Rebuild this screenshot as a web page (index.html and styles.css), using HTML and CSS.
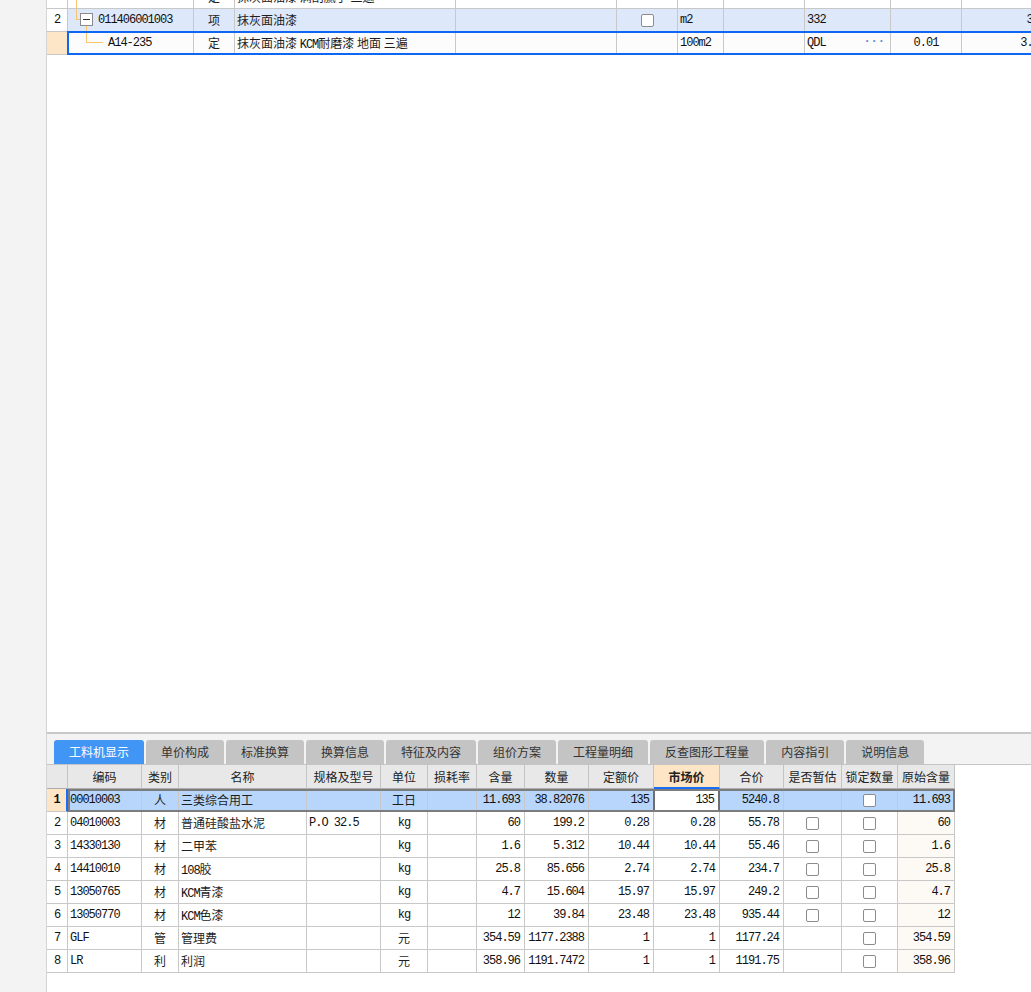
FILE: index.html
```html
<!DOCTYPE html>
<html lang="zh-CN">
<head>
<meta charset="utf-8">
<title>工料机显示</title>
<link rel="stylesheet" href="styles.css">
</head>
<body>
<div class="side"></div>
<div class="main">
  <div class="upper">
    <div class="tree">
      <div class="trow">
        <div class="c"></div>
        <div class="c code"><span class="ln v-full"></span></div>
        <div class="c m">定</div>
        <div class="c l">抹灰面油漆 满刮腻子 二遍</div>
        <div class="c"></div>
        <div class="c"></div>
        <div class="c"></div>
        <div class="c"></div>
        <div class="c l mono">1</div>
        <div class="c"></div>
        <div class="c r mono">1</div>
      </div>
      <div class="trow hl">
        <div class="c m mono rn">2</div>
        <div class="c code mono pad30"><span class="ln v-top1"></span><span class="ln h-1"></span><span class="box"></span><span class="ln v-bot1"></span>011406001003</div>
        <div class="c m">项</div>
        <div class="c l">抹灰面油漆</div>
        <div class="c"></div>
        <div class="c cbc"><span class="cb"></span></div>
        <div class="c l mono">m2</div>
        <div class="c"></div>
        <div class="c l mono">332</div>
        <div class="c"></div>
        <div class="c r mono">332</div>
      </div>
      <div class="trow cur">
        <div class="c peach"></div>
        <div class="c code mono pad40"><span class="ln v-top2"></span><span class="ln h-2"></span>A14-235</div>
        <div class="c m">定</div>
        <div class="c l">抹灰面油漆 <span class="mono">KCM</span>耐磨漆 地面 三遍</div>
        <div class="c"></div>
        <div class="c"></div>
        <div class="c l mono">100m2</div>
        <div class="c"></div>
        <div class="c l mono">QDL<span class="dots">···</span></div>
        <div class="c m mono">0.01</div>
        <div class="c r mono">3.32</div>
      </div>
      <div class="curframe"></div>
    </div>
  </div>
  <div class="lower">
    <div class="tabs">
      <div class="tab on">工料机显示</div>
      <div class="tab">单价构成</div>
      <div class="tab">标准换算</div>
      <div class="tab">换算信息</div>
      <div class="tab">特征及内容</div>
      <div class="tab">组价方案</div>
      <div class="tab">工程量明细</div>
      <div class="tab">反查图形工程量</div>
      <div class="tab">内容指引</div>
      <div class="tab">说明信息</div>
    </div>
    <div class="grid">
      <div class="brow head">
        <div class="h"></div>
        <div class="h">编码</div>
        <div class="h">类别</div>
        <div class="h">名称</div>
        <div class="h">规格及型号</div>
        <div class="h">单位</div>
        <div class="h">损耗率</div>
        <div class="h">含量</div>
        <div class="h">数量</div>
        <div class="h">定额价</div>
        <div class="h hmk">市场价</div>
        <div class="h">合价</div>
        <div class="h">是否暂估</div>
        <div class="h">锁定数量</div>
        <div class="h">原始含量</div>
      </div>
      <div class="brow sel">
        <div class="d rn1 mono">1</div>
        <div class="d l mono">00010003</div>
        <div class="d m">人</div>
        <div class="d l">三类综合用工</div>
        <div class="d l"></div>
        <div class="d m">工日</div>
        <div class="d"></div>
        <div class="d r mono">11.693</div>
        <div class="d r mono">38.82076</div>
        <div class="d r mono">135</div>
        <div class="d r mono mk">135</div>
        <div class="d r mono">5240.8</div>
        <div class="d"></div>
        <div class="d cbc"><span class="cb"></span></div>
        <div class="d r mono">11.693</div>
      </div>
      <div class="brow">
        <div class="d m mono">2</div>
        <div class="d l mono">04010003</div>
        <div class="d m">材</div>
        <div class="d l">普通硅酸盐水泥</div>
        <div class="d l mono">P.O 32.5</div>
        <div class="d m mono">kg</div>
        <div class="d"></div>
        <div class="d r mono">60</div>
        <div class="d r mono">199.2</div>
        <div class="d r mono">0.28</div>
        <div class="d r mono">0.28</div>
        <div class="d r mono">55.78</div>
        <div class="d cbc"><span class="cb"></span></div>
        <div class="d cbc"><span class="cb"></span></div>
        <div class="d r mono orig">60</div>
      </div>
      <div class="brow">
        <div class="d m mono">3</div>
        <div class="d l mono">14330130</div>
        <div class="d m">材</div>
        <div class="d l">二甲苯</div>
        <div class="d l"></div>
        <div class="d m mono">kg</div>
        <div class="d"></div>
        <div class="d r mono">1.6</div>
        <div class="d r mono">5.312</div>
        <div class="d r mono">10.44</div>
        <div class="d r mono">10.44</div>
        <div class="d r mono">55.46</div>
        <div class="d cbc"><span class="cb"></span></div>
        <div class="d cbc"><span class="cb"></span></div>
        <div class="d r mono orig">1.6</div>
      </div>
      <div class="brow">
        <div class="d m mono">4</div>
        <div class="d l mono">14410010</div>
        <div class="d m">材</div>
        <div class="d l"><span class="mono">108</span>胶</div>
        <div class="d l"></div>
        <div class="d m mono">kg</div>
        <div class="d"></div>
        <div class="d r mono">25.8</div>
        <div class="d r mono">85.656</div>
        <div class="d r mono">2.74</div>
        <div class="d r mono">2.74</div>
        <div class="d r mono">234.7</div>
        <div class="d cbc"><span class="cb"></span></div>
        <div class="d cbc"><span class="cb"></span></div>
        <div class="d r mono orig">25.8</div>
      </div>
      <div class="brow">
        <div class="d m mono">5</div>
        <div class="d l mono">13050765</div>
        <div class="d m">材</div>
        <div class="d l"><span class="mono">KCM</span>青漆</div>
        <div class="d l"></div>
        <div class="d m mono">kg</div>
        <div class="d"></div>
        <div class="d r mono">4.7</div>
        <div class="d r mono">15.604</div>
        <div class="d r mono">15.97</div>
        <div class="d r mono">15.97</div>
        <div class="d r mono">249.2</div>
        <div class="d cbc"><span class="cb"></span></div>
        <div class="d cbc"><span class="cb"></span></div>
        <div class="d r mono orig">4.7</div>
      </div>
      <div class="brow">
        <div class="d m mono">6</div>
        <div class="d l mono">13050770</div>
        <div class="d m">材</div>
        <div class="d l"><span class="mono">KCM</span>色漆</div>
        <div class="d l"></div>
        <div class="d m mono">kg</div>
        <div class="d"></div>
        <div class="d r mono">12</div>
        <div class="d r mono">39.84</div>
        <div class="d r mono">23.48</div>
        <div class="d r mono">23.48</div>
        <div class="d r mono">935.44</div>
        <div class="d cbc"><span class="cb"></span></div>
        <div class="d cbc"><span class="cb"></span></div>
        <div class="d r mono orig">12</div>
      </div>
      <div class="brow">
        <div class="d m mono">7</div>
        <div class="d l mono">GLF</div>
        <div class="d m">管</div>
        <div class="d l">管理费</div>
        <div class="d l"></div>
        <div class="d m">元</div>
        <div class="d"></div>
        <div class="d r mono">354.59</div>
        <div class="d r mono">1177.2388</div>
        <div class="d r mono">1</div>
        <div class="d r mono">1</div>
        <div class="d r mono">1177.24</div>
        <div class="d"></div>
        <div class="d cbc"><span class="cb"></span></div>
        <div class="d r mono orig">354.59</div>
      </div>
      <div class="brow">
        <div class="d m mono">8</div>
        <div class="d l mono">LR</div>
        <div class="d m">利</div>
        <div class="d l">利润</div>
        <div class="d l"></div>
        <div class="d m">元</div>
        <div class="d"></div>
        <div class="d r mono">358.96</div>
        <div class="d r mono">1191.7472</div>
        <div class="d r mono">1</div>
        <div class="d r mono">1</div>
        <div class="d r mono">1191.75</div>
        <div class="d"></div>
        <div class="d cbc"><span class="cb"></span></div>
        <div class="d r mono orig">358.96</div>
      </div>
      <div class="selframe"></div>
    </div>
  </div>
</div>
</body>
</html>
```
FILE: styles.css
```css
* { box-sizing: border-box; }
html, body { margin: 0; padding: 0; }
body {
  display: flex;
  width: 1031px;
  height: 992px;
  overflow: hidden;
  background: #fff;
  font-family: "Noto Sans CJK SC", "Liberation Sans", sans-serif;
  font-size: 12px;
  color: #1e1e1e;
}
.side { width: 46px; flex: none; background: #f3f3f3; }
.main {
  flex: 1;
  min-width: 0;
  border-left: 1px solid #d4d4d4;
  display: flex;
  flex-direction: column;
  overflow: hidden;
}
.upper {
  flex: 1;
  min-height: 0;
  overflow: hidden;
  background: #fff;
  border-bottom: 2px solid #c8c8c8;
}
.mono {
  font-family: "Liberation Mono", "Noto Sans CJK SC", monospace;
  font-size: 12px;
  letter-spacing: -1px;
  color: #111;
}
.l { padding-left: 2px; }
.r { text-align: right; padding-right: 4px; }
.m { text-align: center; }

/* upper tree table */
.tree { position: relative; margin-top: -14px; width: 1003px; }
.trow {
  display: grid;
  grid-template-columns: 21px 126px 41px 221px 161px 61px 46px 81px 86px 71px 88px;
  height: 23px;
}
.c {
  position: relative;
  border-right: 1px solid #c8c8c8;
  border-bottom: 1px solid #c8c8c8;
  line-height: 22px;
  white-space: nowrap;
  overflow: hidden;
}
.trow.hl .c { background: #dde8fb; }
.trow.hl .c.rn { background: #fff; }
.trow.cur .c { background: #fcfcfc; }
.trow.cur .c.peach { background: #fde6c8; }
.pad30 { padding-left: 30px; }
.pad40 { padding-left: 40px; }
.ln { position: absolute; background: #f9c46c; }
.v-full { left: 8px; top: 0; bottom: 0; width: 1px; }
.v-top1 { left: 8px; top: 0; height: 11px; width: 1px; }
.h-1 { left: 8px; top: 10px; width: 5px; height: 1px; }
.v-bot1 { left: 18px; top: 17px; bottom: 0; width: 1px; }
.v-top2 { left: 18px; top: 0; height: 11px; width: 1px; }
.h-2 { left: 18px; top: 10px; width: 17px; height: 1px; }
.box {
  position: absolute;
  left: 12px;
  top: 4px;
  width: 13px;
  height: 13px;
  border: 1px solid #8c8c8c;
  background: #fff;
}
.box::after {
  content: "";
  position: absolute;
  left: 2px;
  top: 5px;
  width: 7px;
  height: 1px;
  background: #333;
}
.dots {
  position: absolute;
  right: 5px;
  top: -1px;
  color: #5b8ed4;
  font-weight: bold;
  letter-spacing: 0;
}
.curframe {
  position: absolute;
  left: 20px;
  top: 45px;
  width: 1000px;
  height: 24px;
  border: 2px solid #0f66f2;
  pointer-events: none;
}
.cbc { display: flex; align-items: center; justify-content: center; }
.cb {
  display: block;
  width: 13px;
  height: 13px;
  border: 1px solid #8c8c8c;
  border-radius: 2px;
  background: #fff;
}

/* lower panel */
.lower { height: 258px; flex: none; background: #fff; }
.tabs {
  display: flex;
  gap: 2px;
  padding: 6px 0 0 7px;
  height: 31px;
  background: #f3f3f3;
  border-bottom: 1px solid #c4c4c4;
}
.tab {
  height: 24px;
  line-height: 24px;
  padding: 0 15px;
  background: #c4c4c4;
  color: #333;
  border-radius: 3px 3px 0 0;
  white-space: nowrap;
}
.tab.on { background: #4196f5; color: #fff; }

.grid { position: relative; width: 908px; }
.brow {
  display: grid;
  grid-template-columns: 21px 74px 37px 128px 74px 47px 49px 48px 64px 65px 66px 64px 58px 56px 57px;
  height: 23px;
}
.brow.head { height: 24px; }
.h {
  background: #e8e8e8;
  border-right: 1px solid #c4c4c4;
  border-bottom: 1px solid #adadad;
  text-align: center;
  line-height: 23px;
  color: #222;
  white-space: nowrap;
  overflow: hidden;
}
.h.hmk {
  background: #fde5c6;
  font-weight: bold;
  border-bottom: 2px solid #1a6ef5;
}
.d {
  border-right: 1px solid #c8c8c8;
  border-bottom: 1px solid #c8c8c8;
  line-height: 22px;
  white-space: nowrap;
  overflow: hidden;
}
.d.orig { background: #fdfaf5; }
.brow.sel .d { background: #b8d6fb; }
.brow.sel .d.rn1 {
  background: #fde6c8;
  border-right: 2px solid #1a6ef5;
  text-align: center;
  font-weight: bold;
}
.brow.sel .d.mk {
  background: #fff;
  border-left: 1px solid #6e6e6e;
  border-right: 2px solid #6e6e6e;
  box-shadow: -1px 0 0 #6e6e6e;
}
.selframe {
  position: absolute;
  left: 21px;
  top: 24px;
  width: 887px;
  height: 23px;
  border: 2px solid #7c7c7c;
  pointer-events: none;
}
```
